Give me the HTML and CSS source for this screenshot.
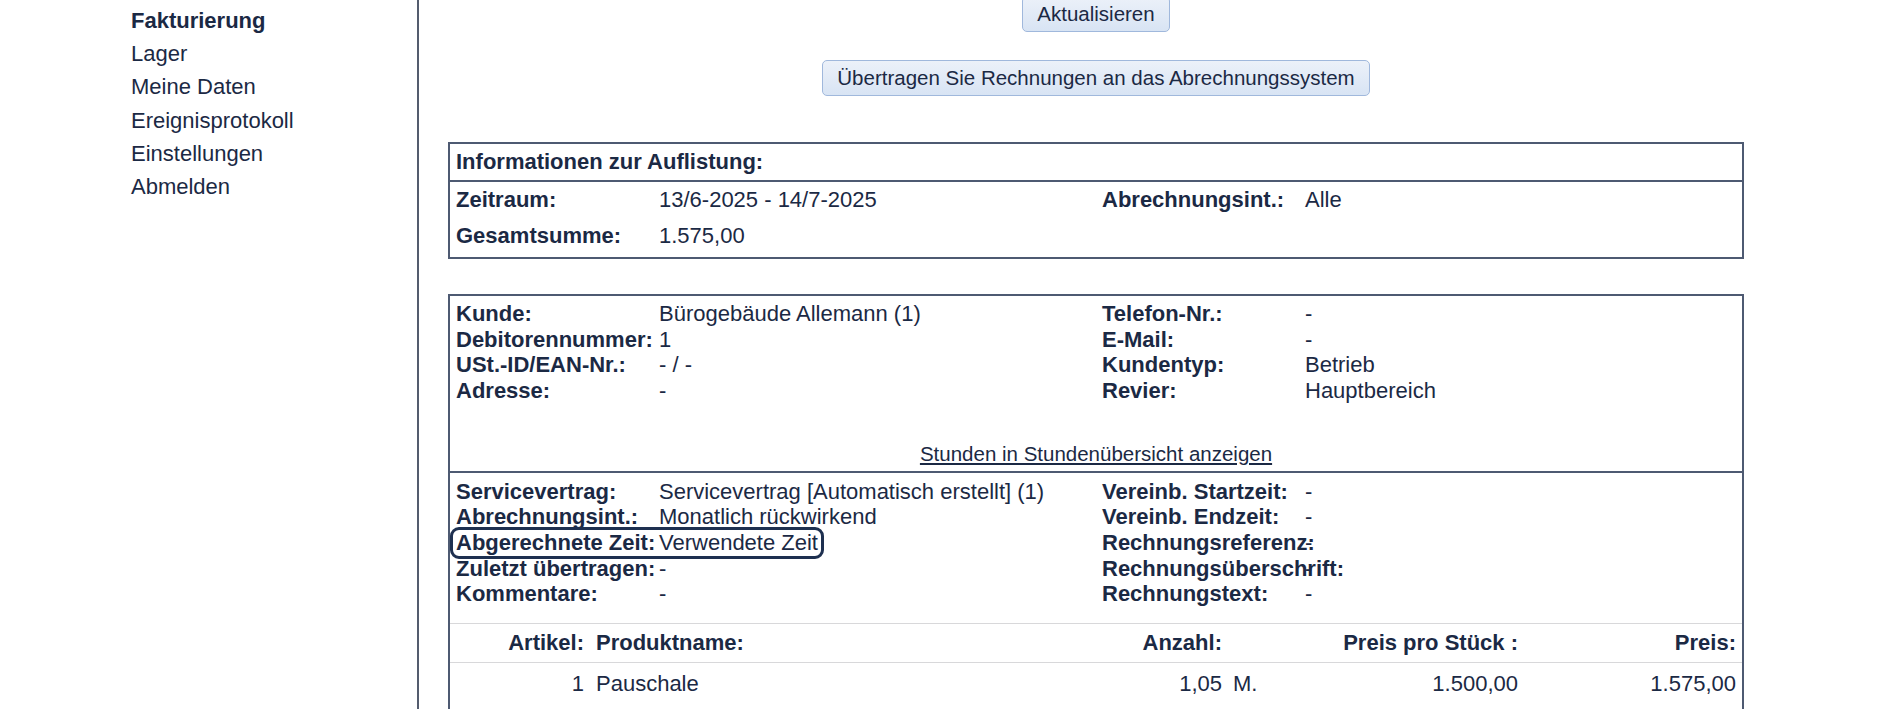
FILE: index.html
```html
<!DOCTYPE html>
<html lang="de">
<head>
  <title>Fakturierung</title>
  <meta name="viewport" content="width=device-width, initial-scale=1">
  <link rel="stylesheet" href="styles.css">
</head>
<body>
  <div class="layout">
    <ul class="side-menu">
      <li class="active">Fakturierung</li>
      <li>Lager</li>
      <li>Meine Daten</li>
      <li>Ereignisprotokoll</li>
      <li>Einstellungen</li>
      <li>Abmelden</li>
    </ul>

    <div class="main">
      <div class="actions">
        <button class="btn">Aktualisieren</button>
        <button class="btn">Übertragen Sie Rechnungen an das Abrechnungssystem</button>
      </div>

      <div class="box summary">
        <div class="box-head">Informationen zur Auflistung:</div>
        <div class="summary-body">
          <span class="label">Zeitraum:</span><span>13/6-2025 - 14/7-2025</span>
          <span class="label">Abrechnungsint.:</span><span>Alle</span>
          <span class="label">Gesamtsumme:</span><span>1.575,00</span>
          <span></span><span></span>
        </div>
      </div>

      <div class="box invoice">
        <div class="section customer">
          <div class="pairs">
            <div class="pair"><span class="label">Kunde:</span><span>Bürogebäude Allemann (1)</span></div>
            <div class="pair"><span class="label">Debitorennummer:</span><span>1</span></div>
            <div class="pair"><span class="label">USt.-ID/EAN-Nr.:</span><span>- / -</span></div>
            <div class="pair"><span class="label">Adresse:</span><span>-</span></div>
          </div>
          <div class="pairs">
            <div class="pair"><span class="label">Telefon-Nr.:</span><span>-</span></div>
            <div class="pair"><span class="label">E-Mail:</span><span>-</span></div>
            <div class="pair"><span class="label">Kundentyp:</span><span>Betrieb</span></div>
            <div class="pair"><span class="label">Revier:</span><span>Hauptbereich</span></div>
          </div>
          <a class="hours-link" href="#">Stunden in Stundenübersicht anzeigen</a>
        </div>

        <div class="section contract">
          <div class="pairs">
            <div class="pair"><span class="label">Servicevertrag:</span><span>Servicevertrag [Automatisch erstellt] (1)</span></div>
            <div class="pair"><span class="label">Abrechnungsint.:</span><span>Monatlich rückwirkend</span></div>
            <div class="pair focused"><span class="label">Abgerechnete Zeit:</span><span>Verwendete Zeit</span></div>
            <div class="pair"><span class="label">Zuletzt übertragen:</span><span>-</span></div>
            <div class="pair"><span class="label">Kommentare:</span><span>-</span></div>
          </div>
          <div class="pairs">
            <div class="pair"><span class="label">Vereinb. Startzeit:</span><span>-</span></div>
            <div class="pair"><span class="label">Vereinb. Endzeit:</span><span>-</span></div>
            <div class="pair"><span class="label">Rechnungsreferenz:</span><span>-</span></div>
            <div class="pair"><span class="label">Rechnungsüberschrift:</span><span>-</span></div>
            <div class="pair"><span class="label">Rechnungstext:</span><span>-</span></div>
          </div>
        </div>

        <table class="lines">
          <colgroup>
            <col class="c-no">
            <col class="c-name">
            <col class="c-qty">
            <col class="c-unit">
            <col class="c-unitprice">
            <col>
          </colgroup>
          <thead>
            <tr>
              <th class="num">Artikel:</th>
              <th>Produktname:</th>
              <th class="num">Anzahl:</th>
              <th></th>
              <th class="num">Preis pro Stück :</th>
              <th class="num">Preis:</th>
            </tr>
          </thead>
          <tbody>
            <tr>
              <td class="num">1</td>
              <td>Pauschale</td>
              <td class="num">1,05</td>
              <td>M.</td>
              <td class="num">1.500,00</td>
              <td class="num">1.575,00</td>
            </tr>
          </tbody>
        </table>
      </div>
    </div>
  </div>
</body>
</html>
```

FILE: styles.css
```css
body {
  margin: 0;
  font-family: "Liberation Sans", Arial, sans-serif;
  font-size: 22px;
  color: rgb(27, 41, 68);
  background-color: #fff;
  overflow: hidden;
}

.layout {
  display: flex;
  min-height: 709px;
}

.side-menu {
  list-style: none;
  margin: 0;
  padding: 4px 0 0 131px;
  width: 286px;
  flex-shrink: 0;
  border-right: 2px solid rgb(84, 92, 110);
  line-height: 33.2px;
}

.side-menu .active {
  font-weight: bold;
}

.main {
  width: 1296px;
  margin-left: 29px;
}

.actions {
  display: flex;
  flex-direction: column;
  align-items: center;
  gap: 28px;
  margin-top: -4px;
}

.btn {
  font-family: inherit;
  font-size: 20.5px;
  color: inherit;
  height: 36px;
  padding: 0 14px;
  border: 1.5px solid rgb(160, 184, 220);
  border-radius: 5px;
  background: linear-gradient(rgb(236, 241, 249), rgb(216, 228, 244));
}

.box {
  border: 2px solid rgb(78, 90, 114);
}

.summary {
  margin-top: 46px;
}

.box-head {
  font-weight: bold;
  height: 36px;
  line-height: 36px;
  padding-left: 6px;
  border-bottom: 2px solid rgb(78, 90, 114);
}

.summary-body {
  display: grid;
  grid-template-columns: 203px 443px 203px 1fr;
  grid-auto-rows: 36px;
  align-items: center;
  padding: 0 0 3px 6px;
}

.label {
  font-weight: bold;
  white-space: nowrap;
}

.invoice {
  margin-top: 35px;
  height: 430px;
}

.section {
  display: grid;
  grid-template-columns: 646px 1fr;
  padding-left: 6px;
}

.customer {
  padding-top: 5px;
  padding-bottom: 4px;
  border-bottom: 2px solid rgb(78, 90, 114);
}

.contract {
  padding-top: 6px;
  padding-bottom: 16px;
  border-bottom: 1.5px solid rgb(216, 216, 218);
}

.pairs {
  line-height: 25.7px;
}

.pair {
  display: grid;
  grid-template-columns: 203px auto;
  width: max-content;
}

.pair span {
  white-space: nowrap;
}

/* keyboard focus ring on the billed-time row */
.pair.focused {
  margin-left: -3px;
  padding: 0 3px;
  outline: 3px solid rgb(30, 48, 80);
  border-radius: 6px;
}

.hours-link {
  grid-column: 1 / span 2;
  justify-self: center;
  margin-top: 37px;
  margin-left: -6px;
  font-size: 20.5px;
  line-height: 25.7px;
  color: inherit;
}

.lines {
  width: 100%;
  table-layout: fixed;
  border-collapse: collapse;
}

.lines .c-no { width: 140px; }
.lines .c-name { width: 412px; }
.lines .c-qty { width: 226px; }
.lines .c-unit { width: 74px; }
.lines .c-unitprice { width: 222px; }

.lines th,
.lines td {
  padding: 0 6px;
  text-align: left;
  white-space: nowrap;
}

.lines th {
  height: 38px;
  border-bottom: 1.5px solid rgb(216, 216, 218);
}

.lines td {
  height: 42px;
}

.lines .num {
  text-align: right;
}

.lines td:nth-child(4) {
  padding-left: 5px;
}
```
